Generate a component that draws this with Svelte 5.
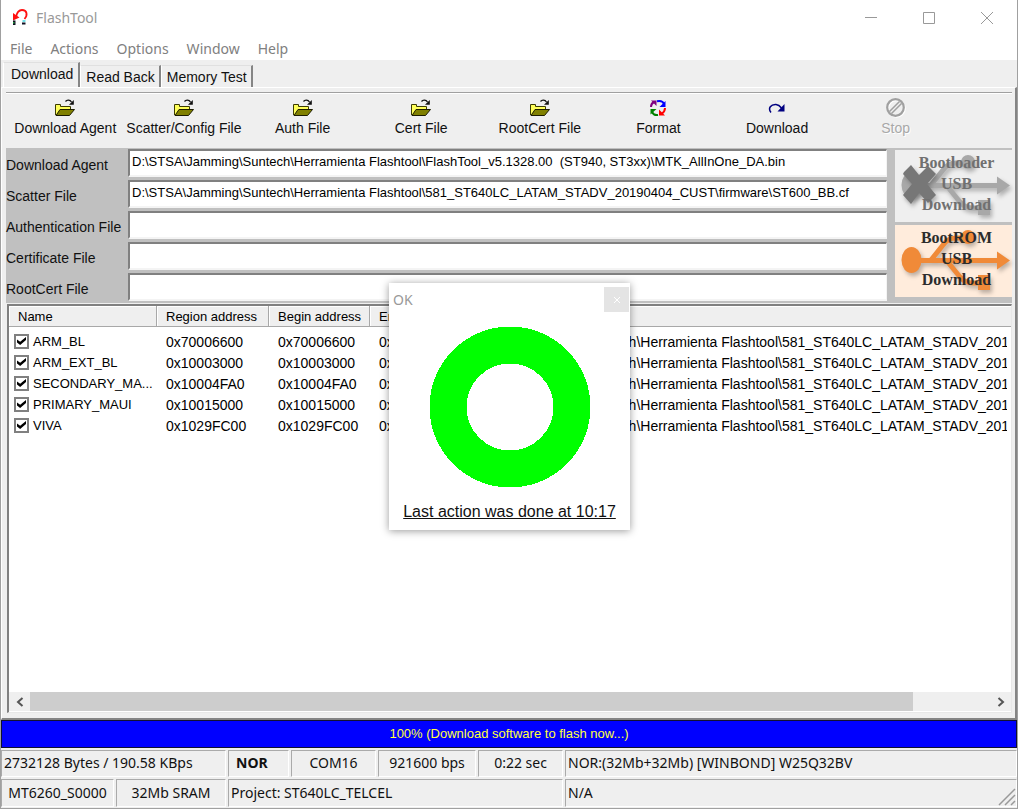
<script>
  const menus = ['File', 'Actions', 'Options', 'Window', 'Help'];
  const tabs = ['Download', 'Read Back', 'Memory Test'];
  let activeTab = $state('Download');

  const tools = [
    { label: 'Download Agent', icon: 'folder' },
    { label: 'Scatter/Config File', icon: 'folder' },
    { label: 'Auth File', icon: 'folder' },
    { label: 'Cert File', icon: 'folder' },
    { label: 'RootCert File', icon: 'folder' },
    { label: 'Format', icon: 'format' },
    { label: 'Download', icon: 'download' },
    { label: 'Stop', icon: 'stop', disabled: true },
  ];

  const base = 'D:\\STSA\\Jamming\\Suntech\\Herramienta Flashtool\\';
  const firmware = base + '581_ST640LC_LATAM_STADV_20190404_CUST\\firmware\\';

  let files = $state([
    { id: 'da', label: 'Download Agent', value: base + 'FlashTool_v5.1328.00  (ST940, ST3xx)\\MTK_AllInOne_DA.bin' },
    { id: 'scatter', label: 'Scatter File', value: firmware + 'ST600_BB.cf' },
    { id: 'auth', label: 'Authentication File', value: '' },
    { id: 'cert', label: 'Certificate File', value: '' },
    { id: 'rootcert', label: 'RootCert File', value: '' },
  ]);

  let regions = $state([
    { name: 'ARM_BL', address: '0x70006600', checked: true },
    { name: 'ARM_EXT_BL', address: '0x10003000', checked: true },
    { name: 'SECONDARY_MA...', address: '0x10004FA0', checked: true },
    { name: 'PRIMARY_MAUI', address: '0x10015000', checked: true },
    { name: 'VIVA', address: '0x1029FC00', checked: true },
  ]);

  let dialogOpen = $state(true);
</script>

{#snippet toolIcon(kind)}
  {#if kind === 'folder'}
    <svg width="20" height="18" viewBox="0 0 20 18" aria-hidden="true">
      <path d="M.500 16V5.500H5.500V7.500H15.500V11" fill="#ffff5a" stroke="#3c3c00" />
      <path d="M1 16.500 5 10.500H19.500L14.500 16.500Z" fill="#808000" stroke="#1c1c00" />
      <path d="M10.500 2.500C12 .500 15 .800 16.500 3" fill="none" stroke="#111" stroke-width="1.300" />
      <path d="M18.800 1V5.800H14Z" fill="#111" />
    </svg>
  {:else if kind === 'format'}
    <svg width="18" height="18" viewBox="0 0 18 18" aria-hidden="true">
      <path d="M2 8C2 6 3 4 5 3" fill="none" stroke="#800080" stroke-width="2" />
      <path d="M2 1.500H7.500V7Z" fill="#800080" />
      <path d="M8 2.200C11 1.500 14 2.500 15 5" fill="none" stroke="#0000ff" stroke-width="2" />
      <path d="M16.500 2V8H10.500Z" fill="#0000ff" />
      <path d="M16 9C16 11.500 15 13 13 14.500" fill="none" stroke="#ff0000" stroke-width="2" />
      <path d="M10 10.500V16.500H16Z" fill="#ff0000" />
      <path d="M9 16C6 16.500 4 15 3 13" fill="none" stroke="#008000" stroke-width="2" />
      <path d="M1.500 15.500V10H7.500Z" fill="#008000" />
    </svg>
  {:else if kind === 'download'}
    <svg width="18" height="18" viewBox="0 0 18 18" aria-hidden="true">
      <path d="M3 13.500C-.500 9 3 5.200 8 5.500C10.500 5.700 12 7 13.500 9" fill="none" stroke="#000080" stroke-width="1.500" />
      <path d="M16.500 5V12.500H9.500Z" fill="#000080" />
    </svg>
  {:else}
    <svg width="20" height="20" viewBox="0 0 20 20" aria-hidden="true">
      <g fill="none" stroke="#fff" stroke-width="2" transform="translate(1 1)">
        <circle cx="9.500" cy="9.500" r="8.300" />
      </g>
      <g fill="none" stroke="#a0a0a0" stroke-width="2.200">
        <circle cx="9.500" cy="9.500" r="8.300" /><path d="M3.500 13.500 13.500 3.500M5.500 15.500 15.500 5.500" stroke-width="1.500" />
      </g>
    </svg>
  {/if}
{/snippet}

{#snippet usbLogo(color)}
  <svg class="logo" viewBox="0 0 117 72" aria-hidden="true">
    <g fill={color} stroke={color}>
      <path d="M15 35.500H104" stroke-width="5" />
      <path d="M36 35 48 20Q53 13 61 13H72" fill="none" stroke-width="5" />
      <path d="M52 36 65 52Q70 58 78 58H88" fill="none" stroke-width="5" />
      <ellipse cx="16.500" cy="35" rx="10" ry="13" stroke="none" />
      <circle cx="73" cy="12" r="7" stroke="none" />
      <path d="M83 50H95V65H83Z" stroke="none" />
      <path d="M102 26.500 115 35.500 102 44.500Z" stroke="none" />
    </g>
  </svg>
{/snippet}

<div class="window">
  <header class="titlebar">
    <svg width="18" height="18" viewBox="0 0 18 18" aria-hidden="true">
      <path d="M4 8C5 3 7 1 10 1C15 1 16 6 12.500 10" fill="none" stroke="#ff1010" stroke-width="1.800" />
      <path d="M1 4V11.500L7.500 8.500Z" fill="#ff1010" />
      <path d="M1 11.500H3.500V16H1Z" fill="#112" /><path d="M1 13H2.500V14.500H1Z" fill="#20a040" />
      <path d="M10.500 11H13.500V13H10.500Z" fill="#70e0e8" /><path d="M10 13.500H13.500V15.500H10Z" fill="#112" />
    </svg>
    <h1>FlashTool</h1>
    <div class="caption">
      <button type="button" aria-label="Minimize"><svg width="12" height="12"><path d="M0 5.500H12" /></svg></button>
      <button type="button" aria-label="Maximize"><svg width="12" height="12"><path d="M.500 .500H11.500V11.500H.500Z" /></svg></button>
      <button type="button" aria-label="Close"><svg width="12" height="12"><path d="M0 0 12 12M12 0 0 12" /></svg></button>
    </div>
  </header>

  <nav class="menubar">
    {#each menus as item}
      <button type="button">{item}</button>
    {/each}
  </nav>

  <div class="tabs" role="tablist">
    {#each tabs as tab}
      <button type="button" role="tab" class="tab" class:active={tab === activeTab} aria-selected={tab === activeTab} onclick={() => (activeTab = tab)}>{tab}</button>
    {/each}
  </div>

  <main class="page">
    <div class="toolbar">
      {#each tools as tool}
        <button type="button" class="tool" disabled={tool.disabled}>
          <span class="tool-icon">{@render toolIcon(tool.icon)}</span>
          <span>{tool.label}</span>
        </button>
      {/each}
    </div>

    <section class="files">
      <div class="fields">
        {#each files as file}
          <div class="field">
            <label for={file.id}>{file.label}</label>
            <input id={file.id} type="text" bind:value={file.value} spellcheck="false" />
          </div>
        {/each}
      </div>
      <div class="modes">
        <button type="button" class="mode off">
          {@render usbLogo('#a8a8a8')}
          <svg class="logo" viewBox="0 0 117 72" aria-hidden="true">
            <path d="M9 22 16 15 24 25 33 16 41 24 32 34 41 45 33 53 24 43 16 54 8 45 17 34 8 24Z" fill="#777" />
          </svg>
          <span>Bootloader<br />USB<br />Download</span>
        </button>
        <button type="button" class="mode on">
          {@render usbLogo('#f08a38')}
          <span>BootROM<br />USB<br />Download</span>
        </button>
      </div>
    </section>

    <section class="list">
      <table>
        <colgroup>
          <col class="c-name" /><col class="c-region" /><col class="c-begin" /><col class="c-end" /><col />
        </colgroup>
        <thead>
          <tr><th>Name</th><th>Region address</th><th>Begin address</th><th>End address</th><th>Location</th></tr>
        </thead>
        <tbody>
          {#each regions as row}
            <tr>
              <td><label class="check"><input type="checkbox" bind:checked={row.checked} /><span>{row.name}</span></label></td>
              <td>{row.address}</td>
              <td>{row.address}</td>
              <td>{row.address}</td>
              <td class="path">{firmware}</td>
            </tr>
          {/each}
        </tbody>
      </table>
      <div class="scrollbar">
        <button type="button" aria-label="Scroll left"><svg width="8" height="10"><path d="M6.500 1 2 5 6.500 9" /></svg></button>
        <div class="track"><div class="thumb"></div></div>
        <button type="button" aria-label="Scroll right"><svg width="8" height="10"><path d="M1.500 1 6 5 1.500 9" /></svg></button>
      </div>
    </section>
  </main>

  <div class="progress" role="status">100% (Download software to flash now...)</div>

  <footer class="status">
    <div class="row first">
      <span>2732128 Bytes / 190.58 KBps</span>
      <span class="strong">NOR</span>
      <span class="mid">COM16</span>
      <span class="mid">921600 bps</span>
      <span class="mid">0:22 sec</span>
      <span>NOR:(32Mb+32Mb) [WINBOND] W25Q32BV</span>
    </div>
    <div class="row second">
      <span class="mid">MT6260_S0000</span>
      <span class="mid">32Mb SRAM</span>
      <span>Project: ST640LC_TELCEL</span>
      <span class="last">N/A
        <svg class="grip" width="18" height="18" viewBox="0 0 18 18" aria-hidden="true"><path d="M1 17 17 1M7 17 17 7M13 17 17 13" fill="none" stroke="#999" stroke-width="1.500" /></svg>
      </span>
    </div>
  </footer>

  {#if dialogOpen}
    <div class="dialog" role="dialog" aria-label="OK">
      <div class="dialog-title">
        <span>OK</span>
        <button type="button" aria-label="Close dialog" onclick={() => (dialogOpen = false)}><svg width="8" height="8"><path d="M1 1 7 7M7 1 1 7" /></svg></button>
      </div>
      <svg class="ring" width="162" height="162" viewBox="0 0 162 162" aria-hidden="true" shape-rendering="crispEdges">
        <circle cx="81" cy="81" r="62" fill="none" stroke="#00ff00" stroke-width="37" />
      </svg>
      <a href="#log">Last action was done at 10:17</a>
    </div>
  {/if}
</div>

<style>
  :global(body) { margin: 0; background: #efefef; }
  * { box-sizing: border-box; }
  button { font: inherit; color: inherit; border: 0; padding: 0; background: none; }

  .window {
    position: relative;
    display: flex;
    flex-direction: column;
    min-height: 100vh;
    padding-bottom: 1px;
    border: solid #a0a0a0;
    border-width: 0 1px 1px;
    background: #efefef;
    color: #111;
    font: 13px/18px "Liberation Sans", Arial, sans-serif;
  }

  .titlebar, .menubar { display: flex; align-items: center; background: #fff; font: 14px/18px "Noto Sans", "Segoe UI", sans-serif; }
  .titlebar { height: 36px; padding-left: 11px; gap: 6px; }
  h1 { margin: 0; font-size: 14px; font-weight: 400; color: #999; }
  .caption { display: flex; margin-left: auto; padding-right: 1px; }
  .caption button { width: 58px; height: 36px; display: grid; place-items: center; }
  .caption path { fill: none; stroke: #999; }
  .menubar { height: 24px; padding: 2px 0 0 9px; gap: 18px; color: #808080; }

  .tabs { display: flex; align-items: flex-end; height: 27px; padding: 2px 2px 0; font-size: 14px; }
  .tab { height: 22px; padding: 0 4px 0 5px; border: solid; border-width: 1px 2px 0 1px; border-color: #e0e0e0 #858585 #fff #fff; }
  .tab.active { height: 25px; padding: 0 5px 2px 7px; border-color: #e0e0e0 #858585 #efefef #fff; }

  .page {
    flex: 1;
    display: flex;
    flex-direction: column;
    padding: 4px 3px 4px 4px;
    border: solid;
    border-width: 1px 2px 2px 1px;
    border-color: #fff #858585 #858585 #fff;
  }
  .toolbar { display: flex; height: 56px; padding-right: 57px; border-top: 1px solid #a0a0a0; box-shadow: inset 0 1px #fff; font-size: 14px; }
  .tool { flex: 1 1 0; min-width: 0; display: flex; flex-direction: column; align-items: center; padding-top: 4px; white-space: nowrap; }
  .tool-icon { height: 22px; display: grid; place-items: center; }
  .tool:disabled { color: #a8a8a8; text-shadow: 1px 1px #fff; }

  .files { display: flex; gap: 8px; padding-top: 1px; background: #c0c0c0; }
  .fields { flex: 1; min-width: 0; display: grid; gap: 4px; padding-bottom: 3px; }
  .field { display: grid; grid-template-columns: 122px 1fr; height: 27px; align-items: center; }
  .field label { padding-top: 4px; font-size: 14px; white-space: nowrap; }
  .field input {
    width: 100%; height: 28px; min-width: 0; padding: 0 0 4px 2px; border: solid; border-width: 2px 1px 2px 2px;
    border-color: #808080 #f4f4f4 #f4f4f4 #808080; background: #fff; color: #000; font: inherit; outline: 0; border-radius: 0;
  }
  .modes { flex: 0 0 117px; display: grid; gap: 3px; align-content: start; padding-top: 1px; }
  .mode { position: relative; height: 72px; font: bold 16px/21px "Liberation Serif", serif; }
  .mode span { position: relative; display: block; padding: 0 0 6px 6px; }
  .mode.off { background: #efefef; color: #707070; }
  .mode.on { background: #ffecdc; color: #2c2c2c; }
  .logo { position: absolute; inset: 0; width: 100%; height: 100%; filter: drop-shadow(2px 3px 2px #0004); }

  .list { flex: 1; display: flex; flex-direction: column; margin: 1px 0 1px 1px; border: solid; border-width: 2px 1px 1px 2px; border-color: #808080 #e8e8e8 #e8e8e8 #808080; background: #fff; overflow: hidden; }
  table { width: 100%; table-layout: fixed; border-collapse: separate; border-spacing: 0; color: #000; }
  .c-name { width: 148px; }
  .c-region { width: 112px; }
  .c-begin { width: 101px; }
  .c-end { width: 87px; }
  th { height: 21px; padding: 2px 0 0 9px; font-weight: 400; text-align: left; white-space: nowrap; overflow: hidden; background: #efefef; border-right: 1px solid #a8a8a8; border-bottom: 1px solid #a8a8a8; box-shadow: inset 1px 1px #fff; }
  th:last-child { border-right: 0; }
  tbody::before { content: ""; display: block; height: 4px; }
  td { height: 21px; padding: 0 0 0 9px; font-size: 14px; white-space: nowrap; overflow: hidden; }
  td:first-child { padding: 0 0 0 5px; font-size: 13px; }
  .path { border-right: 4px solid #fff; }
  .check { display: flex; align-items: center; gap: 4px; }
  .check input { appearance: none; flex: none; width: 15px; height: 15px; margin: 0; border: 2px solid #808080; background: #fff; }
  .check input:checked::before { content: ""; display: block; width: 9px; height: 8px; margin: 1px; background: #000; clip-path: polygon(0 30%, 35% 60%, 100% 0, 100% 38%, 35% 100%, 0 70%); }

  .scrollbar { display: flex; height: 19px; margin: auto 0 1px; background: #efefef; }
  .scrollbar button { width: 21px; display: grid; place-items: center; }
  .scrollbar path { fill: none; stroke: #555; stroke-width: 2; }
  .track { flex: 1; }
  .thumb { width: 92%; height: 100%; background: #cdcdcd; }

  .progress { height: 28px; border: 1px solid #101030; background: #0000ff; color: #ffff40; text-align: center; line-height: 26px; }

  .status { font: 14px/24px "Noto Sans", "Segoe UI", sans-serif; padding-top: 2px; display: grid; gap: 2px; white-space: nowrap; }
  .row { display: grid; gap: 2px; }
  .first { grid-template-columns: 225px 61px 85px 98px 85px 1fr; }
  .second { grid-template-columns: 113px 110px 335px 1fr; }
  .row span { height: 27px; padding-left: 2px; border: solid; border-width: 1px; border-color: #aaa #fff #fff #aaa; overflow: hidden; }
  .second span { height: 28px; line-height: 26px; }
  .row .mid { padding: 0; text-align: center; }
  .row .strong { padding-left: 7px; font-weight: 700; }
  .last { position: relative; }
  .grip { position: absolute; right: 0; bottom: 0; }

  .dialog { position: absolute; left: 388px; top: 283px; width: 241px; padding: 4px 1px 8px 4px; background: #fff; box-shadow: 0 1px 8px #0006; display: flex; flex-direction: column; align-items: center; }
  .dialog-title { align-self: stretch; display: flex; justify-content: space-between; align-items: center; height: 25px; color: #999; font: 14px/24px "Noto Sans", sans-serif; }
  .dialog-title button { width: 25px; height: 25px; background: #e4e4e4; display: grid; place-items: center; }
  .dialog-title path { stroke: #fff; fill: none; }
  .ring { margin: 14px 3px 14px 0; }
  .dialog a { color: #111; font-size: 16px; line-height: 20px; padding-right: 3px; white-space: nowrap; }
</style>
